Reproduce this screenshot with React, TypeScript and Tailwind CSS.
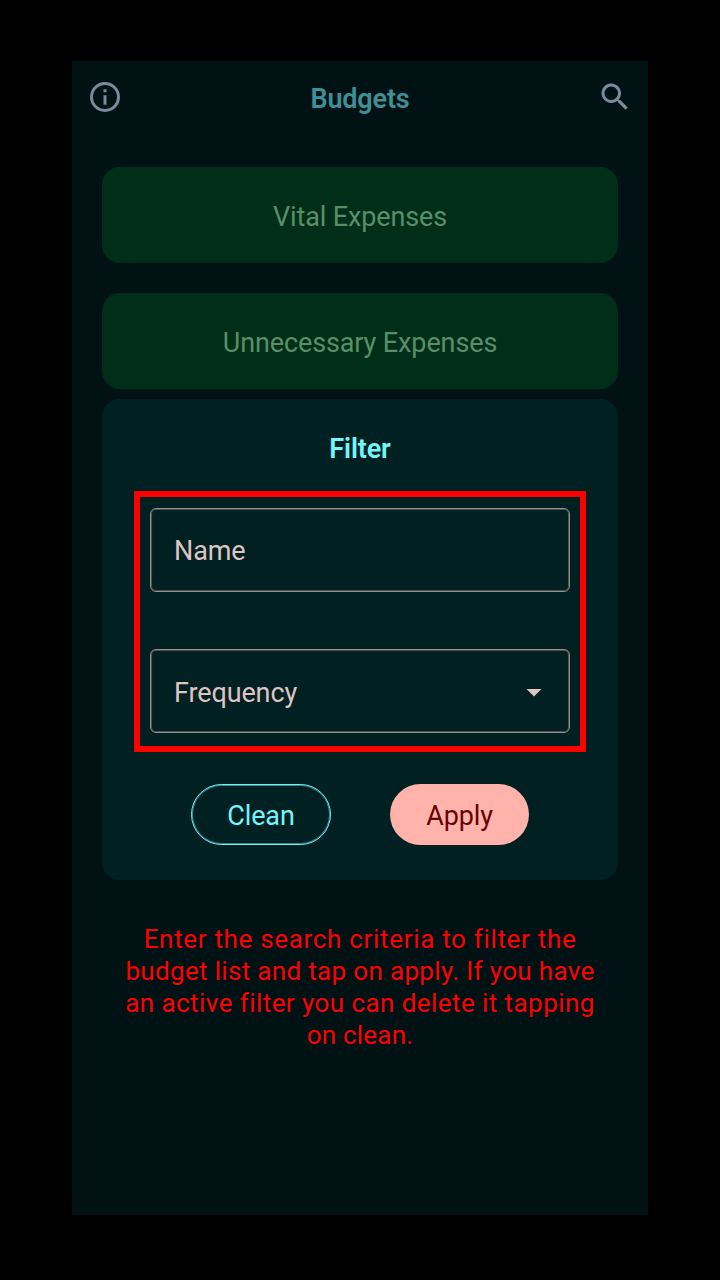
const help = [
  { text: "Enter the search criteria to filter the", tracking: "tracking-[0.68px]" },
  { text: "budget list and tap on apply. If you have", tracking: "tracking-[0.33px]" },
  { text: "an active filter you can delete it tapping", tracking: "tracking-[0.43px]" },
  { text: "on clean.", tracking: "tracking-[0.2px]" },
];

export default function App() {
  return (
    <div className="h-[1280px] w-[720px] bg-black px-[72px] pt-[61px] font-['Roboto',sans-serif]">
      <main className="h-[1154px] bg-[#001214] px-[30px]">
        <header className="-mx-[15px] flex h-[106px] items-start justify-between pt-[18px]">
          <svg className="size-9 fill-[#7b8a9b]" viewBox="0 0 24 24"><path d="M11 6.8h2v2h-2zm0 4h2v6.3h-2zM12 2a10 10 0 1 0 0 20 10 10 0 0 0 0-20zm0 18a8 8 0 1 1 0-16 8 8 0 0 1 0 16z" /></svg>
          <h1 className="mt-[2px] text-[27px] leading-9 font-semibold tracking-[-0.15px] text-[#3f8f96]">Budgets</h1>
          <svg className="size-9 fill-[#7b8a9b]" viewBox="0 0 24 24"><path d="M15.5 14h-.79l-.28-.27a6.5 6.5 0 1 0-.7.7l.27.28v.79l5 4.99L20.49 19zm-6 0a4.5 4.5 0 1 1 0-9 4.5 4.5 0 0 1 0 9z" /></svg>
        </header>
        <div className="flex h-24 items-center justify-center rounded-[18px] bg-[#002e19] pt-1 text-[27px] tracking-[-0.12px] text-[#579068]">Vital Expenses</div>
        <div className="mt-[30px] flex h-24 items-center justify-center rounded-[18px] bg-[#002e19] pt-1 text-[27px] tracking-[-0.12px] text-[#579068]">Unnecessary Expenses</div>
        <section className="mt-[10px] h-[481px] rounded-[18px] bg-[#002022] px-8 pt-[32px]">
          <h2 className="text-center text-[27px] leading-9 font-semibold tracking-[-0.15px] text-[#73f6fb]">Filter</h2>
          <div className="mt-[24px] h-[261px] border-6 border-[#ff0000] px-[10px] pt-[11px]">
            <div className="flex h-[84px] items-center rounded-md border border-[#a08c8a] pt-[3px] pl-[23px] text-[27px] tracking-[-0.12px] text-[#dec4c2] shadow-[inset_0_0_0_1px_#4b5051]">Name</div>
            <div className="mt-[57px] flex h-[84px] items-center justify-between rounded-md border border-[#a08c8a] pt-1 pr-[17px] pl-[23px] text-[27px] tracking-[-0.12px] text-[#dec4c2] shadow-[inset_0_0_0_1px_#4b5051]">
              Frequency
              <svg className="-mt-[2px] size-9 fill-current" viewBox="0 0 24 24"><path d="M7 10l5 5 5-5z" /></svg>
            </div>
          </div>
          <div className="mt-8 flex justify-center gap-[59px] text-[27px] font-normal tracking-[-0.12px]">
            <button className="h-[61px] w-[140px] rounded-full border border-[#73f6fb] pt-1 text-[#73f6fb] shadow-[inset_0_0_0_1px_#398588]">Clean</button>
            <button className="h-[61px] w-[139px] rounded-full bg-[#ffb3ab] pt-1 text-[#690006]">Apply</button>
          </div>
        </section>
        <div className="mt-[43px] text-center text-[26px] leading-8 font-[450] text-[#ff0000]">
          {help.map((line) => (
            <p key={line.text} className={`whitespace-nowrap ${line.tracking}`}>{line.text}</p>
          ))}
        </div>
      </main>
    </div>
  );
}
